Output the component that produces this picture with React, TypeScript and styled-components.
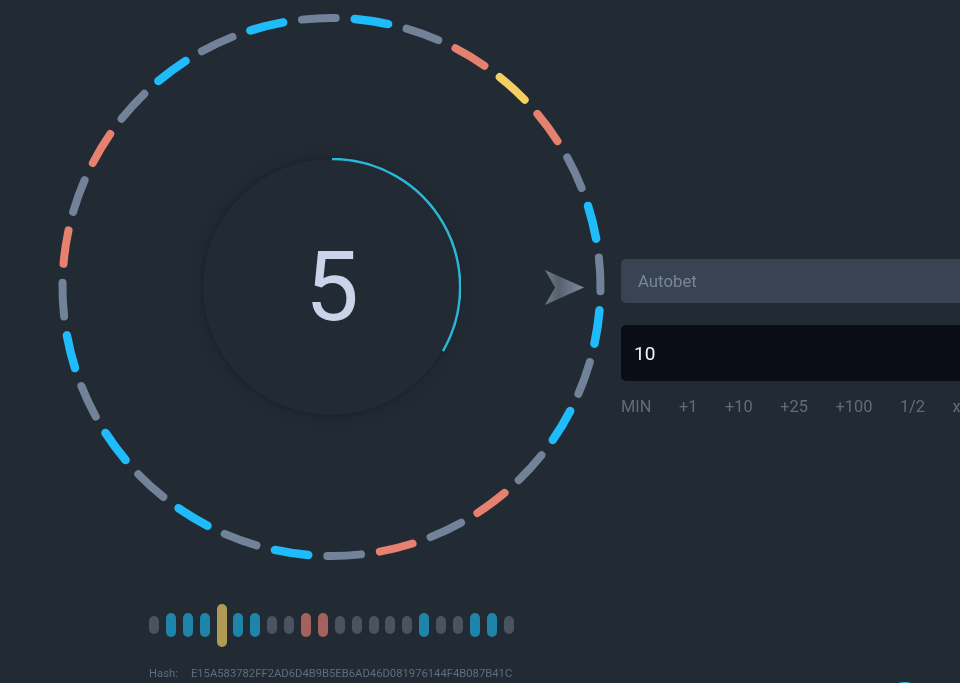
import styled, { createGlobalStyle } from 'styled-components';

const GlobalStyle = createGlobalStyle`
  html, body {
    margin: 0;
    height: 100%;
    background: #222a33;
    font-family: Roboto, 'Liberation Sans', sans-serif;
  }
`;

type Tone = 'gray' | 'blue' | 'salmon' | 'gold';

const WHEEL_COLORS: Record<Tone, string> = {
  gray: '#728299',
  blue: '#1fbbfa',
  salmon: '#e6806f',
  gold: '#f4cf63',
};

const BAR_COLORS: Record<Tone, string> = {
  gray: '#4a5461',
  blue: '#1f84aa',
  salmon: '#a5615c',
  gold: '#b09a55',
};

const WHEEL: Tone[] = [
  'gray', 'blue', 'gray', 'salmon', 'gold', 'salmon', 'gray', 'blue',
  'gray', 'blue', 'gray', 'blue', 'gray', 'salmon', 'gray', 'salmon',
  'gray', 'blue', 'gray', 'blue', 'gray', 'blue', 'gray', 'blue',
  'gray', 'salmon', 'gray', 'salmon', 'gray', 'blue', 'gray', 'blue',
];

const HISTORY: Tone[] = [
  'gray', 'blue', 'blue', 'blue', 'gold', 'blue', 'blue', 'gray', 'gray', 'salmon', 'salmon',
  'gray', 'gray', 'gray', 'gray', 'gray', 'blue', 'gray', 'gray', 'blue', 'blue', 'gray',
];

const QUICK_BETS = ['MIN', '+1', '+10', '+25', '+100', '1/2', 'x2'];

// the reference is a soft, video-like capture
const Page = styled.div`
  display: flex;
  width: 960px;
  height: 683px;
  overflow: hidden;
  background: #222a33;
  filter: blur(0.45px);
`;

const GameColumn = styled.div`
  flex: 0 0 621px;
  padding: 12px 0 0 56px;
  box-sizing: border-box;
  display: flex;
  flex-direction: column;
`;

const Wheel = styled.div`
  position: relative;
  flex: none;
  display: grid;
  place-items: center;
  width: 550px;
  height: 550px;
`;

const WheelRing = styled.svg`
  grid-area: 1 / 1;
  width: 550px;
  height: 550px;
`;

const Timer = styled.div`
  grid-area: 1 / 1;
  position: relative;
  display: flex;
  align-items: center;
  justify-content: center;
  width: 256px;
  height: 256px;
  border-radius: 50%;
  background: #222a33;
  box-shadow: 0 0 3px 1px #1c232b, 0 0 14px 2px rgba(24, 30, 38, 0.3);
`;

const TimerArc = styled.svg`
  position: absolute;
  left: 0;
  top: -1px;
  width: 258px;
  height: 258px;
`;

const Count = styled.span`
  margin-left: 2px;
  font-size: 96px;
  font-weight: 400;
  line-height: 1;
  color: #c9d4e8;
`;

const Pointer = styled.svg`
  position: absolute;
  left: 489px;
  top: 258px;
  width: 40px;
  height: 36px;
`;

const History = styled.div`
  flex: none;
  display: flex;
  align-items: center;
  gap: 6.9px;
  height: 44px;
  margin: 41px 0 0 93px;
`;

const Bar = styled.span<{ $tone: Tone }>`
  flex: none;
  width: 10px;
  height: ${p => (p.$tone === 'gold' ? 43 : p.$tone === 'gray' ? 18 : 24)}px;
  border-radius: 5px;
  background: ${p => BAR_COLORS[p.$tone]};
`;

const HashRow = styled.div`
  flex: none;
  display: flex;
  gap: 13px;
  margin: 20px 0 0 93px;
  font-size: 11.25px;
  line-height: 14px;
  color: #5f6c7f;
  white-space: nowrap;
`;

const BetColumn = styled.div`
  flex: 1;
  min-width: 0;
  padding-top: 259px;
  display: flex;
  flex-direction: column;
`;

const AutobetField = styled.div`
  flex: none;
  display: flex;
  align-items: center;
  width: 420px;
  height: 44px;
  padding-left: 17px;
  box-sizing: border-box;
  border-radius: 5px;
  background: #394452;
  font-size: 16.8px;
  color: #78859b;
`;

const AmountField = styled.div`
  flex: none;
  display: flex;
  align-items: center;
  width: 420px;
  height: 56px;
  margin-top: 22px;
  padding-left: 13px;
  box-sizing: border-box;
  border-radius: 5px;
  background: #0a0d15;
  font-size: 19px;
  color: #f3f5f8;
`;

const QuickRow = styled.div`
  flex: none;
  display: flex;
  gap: 27.5px;
  margin-top: 16px;
  font-size: 16.4px;
  line-height: 19px;
  color: #5f6c7e;
  white-space: nowrap;
`;

const PlayButton = styled.div`
  flex: none;
  width: 44px;
  height: 44px;
  margin: 266px 0 0 262px;
  box-sizing: border-box;
  border-radius: 50%;
  border-top: 3px solid #2bb8dc;
`;

function segmentPath(index: number) {
  const r = 269;
  const mid = -2.7 + index * 11.25;
  const half = 3.6;
  const point = (deg: number) => {
    const a = (deg * Math.PI) / 180;
    return `${(275.5 + r * Math.sin(a)).toFixed(2)} ${(275 - r * Math.cos(a)).toFixed(2)}`;
  };
  return `M${point(mid - half)} A${r} ${r} 0 0 1 ${point(mid + half)}`;
}

export default function App() {
  return (
    <Page>
      <GlobalStyle />
      <GameColumn>
        <Wheel>
          <WheelRing viewBox="0 0 550 550">
            {WHEEL.map((tone, i) => (
              <path
                key={i}
                d={segmentPath(i)}
                fill="none"
                stroke={WHEEL_COLORS[tone]}
                strokeWidth={tone === 'blue' ? 8.5 : 8}
                strokeLinecap="round"
              />
            ))}
          </WheelRing>
          <Timer>
            <TimerArc viewBox="0 0 258 258">
              <path
                d="M129 1 A128 128 0 0 1 240 193"
                fill="none"
                stroke="#2cb6d6"
                strokeWidth="2.5"
              />
            </TimerArc>
            <Count>5</Count>
          </Timer>
          <Pointer viewBox="0 0 40 36">
            <defs>
              <linearGradient id="pointerFill" x1="0" y1="0" x2="1" y2="0">
                <stop offset="0" stopColor="#6f7b89" />
                <stop offset="0.35" stopColor="#56616e" />
                <stop offset="1" stopColor="#7f8c9e" />
              </linearGradient>
            </defs>
            <path d="M0 0 L39 17.5 L0 35 L10 17.5 Z" fill="url(#pointerFill)" />
          </Pointer>
        </Wheel>
        <History>
          {HISTORY.map((tone, i) => (
            <Bar key={i} $tone={tone} />
          ))}
        </History>
        <HashRow>
          <span>Hash:</span>
          <span>E15A583782FF2AD6D4B9B5EB6AD46D081976144F4B087B41C</span>
        </HashRow>
      </GameColumn>
      <BetColumn>
        <AutobetField>Autobet</AutobetField>
        <AmountField>10</AmountField>
        <QuickRow>
          {QUICK_BETS.map(label => (
            <span key={label}>{label}</span>
          ))}
        </QuickRow>
        <PlayButton />
      </BetColumn>
    </Page>
  );
}
